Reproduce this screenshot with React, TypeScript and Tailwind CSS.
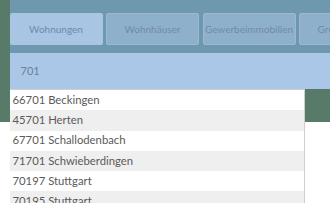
import React from "react";

// tabs over the search field
const tabs = ["Wohnungen", "Wohnhäuser", "Gewerbeimmobilien", "Grundstücke"];

// suggestions for the typed postcode
const results = [
    "66701 Beckingen",
    "45701 Herten",
    "67701 Schallodenbach",
    "71701 Schwieberdingen",
    "70197 Stuttgart",
    "70195 Stuttgart",
];

const App = () => {
    return (
        <div className="relative w-[330px] h-[203px] overflow-hidden bg-white font-['Lato',sans-serif]">
            {/* page background */}
            <div className="h-[122px] bg-[#577b68] pl-[9.5px]">
                {/* search panel */}
                <div className="bg-[#6d98ae] pt-[13px]">
                    <div className="flex gap-[3.5px] h-[32px]">
                        {tabs.map((tab, index) => (
                            <div
                                key={index}
                                className={`shrink-0 w-[93px] rounded-[2px] flex items-center justify-center whitespace-nowrap overflow-hidden text-[10px] text-[#6f8aab] ${
                                    index === 0
                                        ? "bg-[#a8c5e4]"
                                        : "bg-[#8fb0cb] border border-[#9cb9d3]"
                                }`}
                            >
                                {tab}
                            </div>
                        ))}
                    </div>
                    <div className="mt-[8px] h-[36px] bg-[#abc7e7] flex items-center pl-[11px] text-[11px] text-[#6a7f99]">
                        701
                    </div>
                </div>
            </div>

            {/* dropdown */}
            <ul className="absolute left-[10px] top-[89px] w-[295px] bg-white border-t border-r border-[#cfcfcf]">
                {results.map((item, index) => (
                    <li
                        key={index}
                        className={`h-[20.3px] flex items-center pl-[2.5px] text-[11.3px] text-[#5a5a5a] ${
                            index % 2 === 1 ? "bg-[#efefef]" : "bg-white"
                        }`}
                    >
                        {item}
                    </li>
                ))}
            </ul>
        </div>
    );
};

export default App;
